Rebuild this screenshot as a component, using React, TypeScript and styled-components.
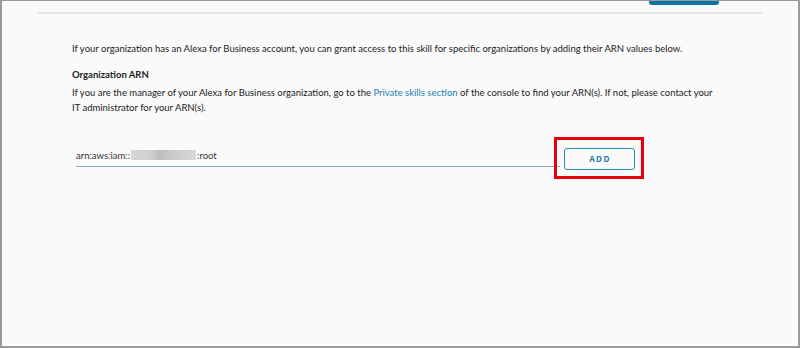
import React from "react";
import styled, { createGlobalStyle } from "styled-components";

const Global = createGlobalStyle`
  html, body { margin: 0; padding: 0; background: #fafafa; }
  body { font-family: Lato, "Liberation Sans", sans-serif; }
`;

const Frame = styled.div`
  box-sizing: border-box;
  width: 800px;
  height: 348px;
  border: 2px solid #9a9a9a;
  border-top-width: 1px;
  box-shadow: inset -1px -1px 0 #ffffff;
  background: #fafafa;
  display: flex;
  flex-direction: column;
  padding: 0 36px;
`;

const TopBar = styled.div`
  display: flex;
  justify-content: flex-end;
  height: 11px;
  border-bottom: 2px solid #e6e6e6;
  padding-right: 43px;
`;

const TopButton = styled.div`
  width: 70px;
  height: 4px;
  background: #0a73a3;
  border-radius: 0 0 3px 3px;
`;

const Content = styled.div`
  padding: 27px 0 0 34px;
  color: #222;
  font-size: 9.5px;
  line-height: 15px;
  white-space: nowrap;
`;

const Para = styled.p<{ $mb?: number }>`
  margin: 0 0 ${(p) => p.$mb ?? 0}px 0;
`;

const Heading = styled.div`
  font-weight: 700;
  margin-bottom: 3px;
`;

const Link = styled.a`
  color: #1a7fb0;
  text-decoration: none;
`;

const InputRow = styled.div`
  display: flex;
  align-items: flex-start;
  margin-top: 22px;
  padding-left: 38px;
`;

const InputField = styled.div`
  box-sizing: border-box;
  width: 484px;
  height: 21px;
  margin-top: 9px;
  padding-bottom: 2px;
  border-bottom: 1px solid #8ea6b6;
  display: flex;
  align-items: center;
  font-size: 9.5px;
  color: #333;
`;

const Blur = styled.span`
  display: inline-block;
  width: 65px;
  height: 10px;
  background: linear-gradient(90deg, #d6d6d6 0%, #d0d0d0 30%, #bdbdbd 45%, #c8c8c8 60%, #d8d8d8 100%);
  margin: 0 1px;
`;

const Highlight = styled.div`
  margin-left: -6px;
  padding: 6px 6px 6px 7px;
  border: 3px solid #e8000b;
`;

const AddButton = styled.button`
  box-sizing: border-box;
  width: 71px;
  height: 22px;
  border: 1.5px solid #2a8db8;
  border-radius: 3px;
  background: #fafafa;
  color: #1d7ba6;
  font-family: "Open Sans", "Liberation Sans", sans-serif;
  font-weight: 700;
  font-size: 8px;
  letter-spacing: 1.4px;
  padding: 0 0 0 1px;
`;

export default function App() {
  return (
    <>
      <Global />
      <Frame>
        <TopBar>
          <TopButton />
        </TopBar>
        <Content>
          <Para $mb={11}>
            If your organization has an Alexa for Business account, you can grant access to this skill for specific
            organizations by adding their ARN values below.
          </Para>
          <Heading>Organization ARN</Heading>
          <Para>
            If you are the manager of your Alexa for Business organization, go to the{" "}
            <Link href="#">Private skills section</Link> of the console to find your ARN(s). If not, please contact your
            <br />
            IT administrator for your ARN(s).
          </Para>
        </Content>
        <InputRow>
          <InputField>
            arn:aws:iam::<Blur />:root
          </InputField>
          <Highlight>
            <AddButton>ADD</AddButton>
          </Highlight>
        </InputRow>
      </Frame>
    </>
  );
}
